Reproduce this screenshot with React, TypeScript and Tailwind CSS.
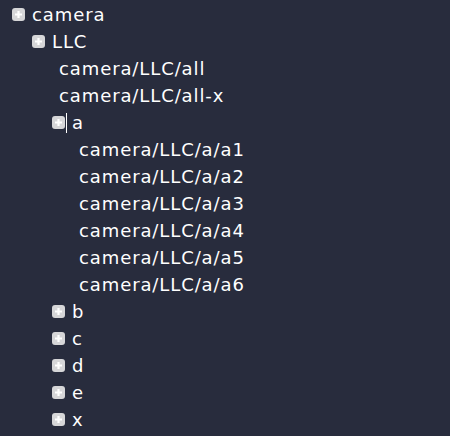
import React from "react";

type Node = { label: string; children?: Node[]; leaf?: boolean };

const tree: Node[] = [
  {
    label: "camera",
    children: [
      {
        label: "LLC",
        children: [
          { label: "camera/LLC/all", leaf: true },
          { label: "camera/LLC/all-x", leaf: true },
          {
            label: "a",
            children: [1, 2, 3, 4, 5, 6].map((n) => ({ label: `camera/LLC/a/a${n}`, leaf: true })),
          },
          { label: "b", children: [] },
          { label: "c", children: [] },
          { label: "d", children: [] },
          { label: "e", children: [] },
          { label: "x", children: [] },
        ],
      },
    ],
  },
];

const PlusIcon = () => (
  <svg width="13" height="13" viewBox="0 0 13 13" className="shrink-0">
    <rect x="0" y="0" width="13" height="13" rx="3" fill="#d6d6d8" />
    <path d="M6.5 3v7M3 6.5h7" stroke="#ffffff" strokeWidth="2.2" />
  </svg>
);

const TreeRow = ({ node, depth }: { node: Node; depth: number }) => {
  if (node.leaf) {
    return (
      <div className="h-[27px] flex items-center whitespace-nowrap" style={{ paddingLeft: depth * 20 + 7 }}>
        {node.label}
      </div>
    );
  }
  return (
    <div>
      <div className="h-[27px] flex items-center whitespace-nowrap" style={{ paddingLeft: depth * 20 }}>
        <PlusIcon />
        <span className="w-[7px] h-[20px] flex justify-start pl-px">
          {node.label === "a" && <span className="w-px h-full bg-white" />}
        </span>
        <span>{node.label}</span>
      </div>
      {node.children?.map((c) => (
        <TreeRow key={c.label} node={c} depth={depth + 1} />
      ))}
    </div>
  );
};

export default function App() {
  return (
    <div
      className="w-[450px] h-[436px] overflow-hidden bg-[#282c3d] text-white text-[18px] tracking-[0.9px] pt-px pl-[12px]"
      style={{ fontFamily: '"DejaVu Sans", "Liberation Sans", sans-serif' }}
    >
      {tree.map((n) => (
        <TreeRow key={n.label} node={n} depth={0} />
      ))}
    </div>
  );
}
